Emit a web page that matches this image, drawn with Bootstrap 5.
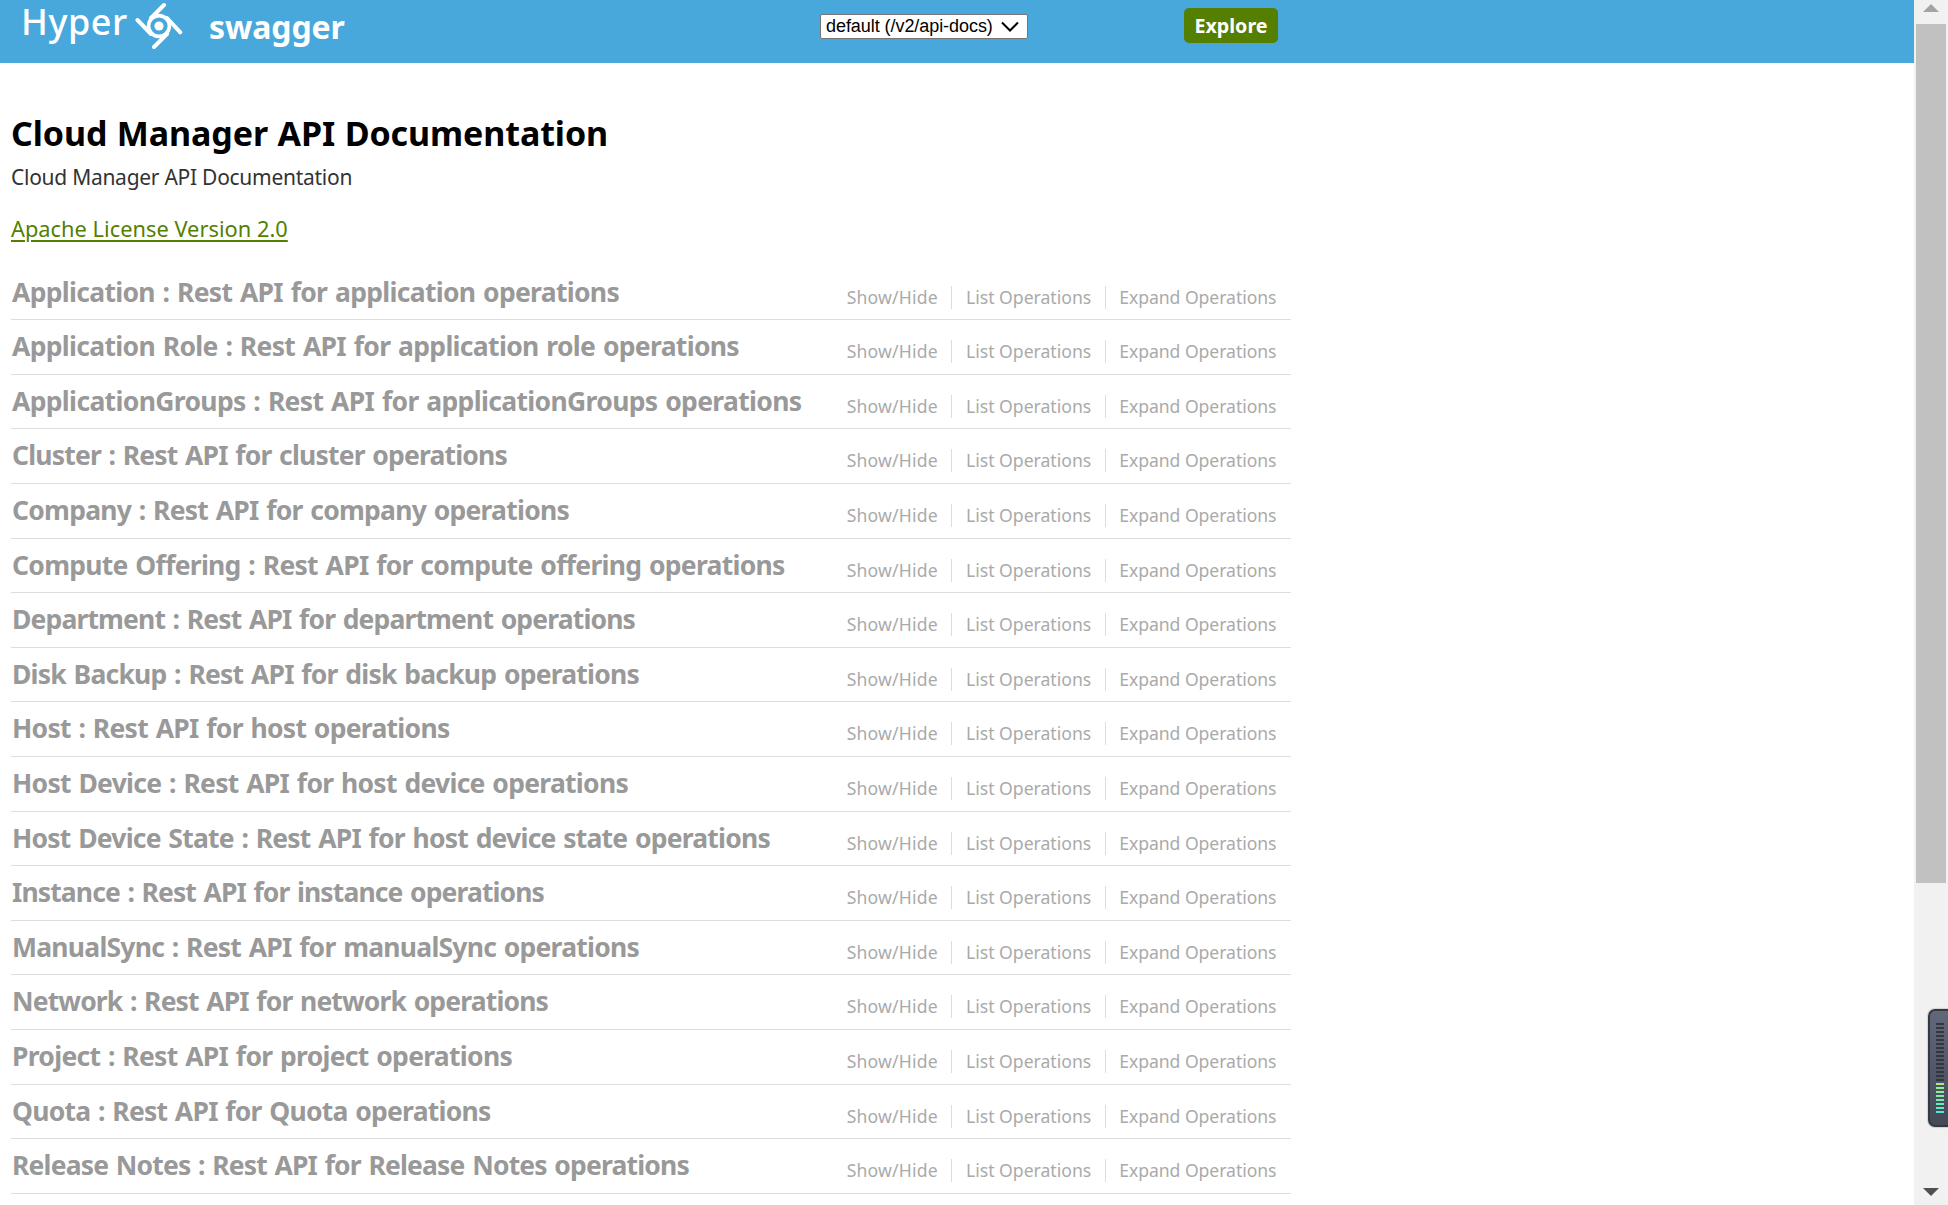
<!DOCTYPE html>
<html lang="en">
<head>
<meta charset="utf-8">
<title>Hyper swagger</title>
<link href="https://cdn.jsdelivr.net/npm/bootstrap@5.3.0/dist/css/bootstrap.min.css" rel="stylesheet">
<style>
body{font-family:"Noto Sans","Open Sans",sans-serif;background:#fff}
.api-bar{height:63px;background:#49a8db}
.api-inner{width:1291px}
.brand-area{width:820px;padding-left:20px}
.brand-hyper{font-size:36px;line-height:44px;font-weight:500;letter-spacing:.5px;width:113px;padding-left:1px}
.brand-icon{width:48px;height:50px;margin-left:2px}
.brand-swagger{font-size:32px;line-height:44px;font-weight:700;margin:5px 0 0 26px;letter-spacing:-.1px}
.spec-select{width:208px;height:25px;margin-top:14px;padding:0 8px 0 5px;border:1px solid #767676;border-radius:2px;font:18px/23px "Liberation Sans",sans-serif;color:#000;background:#fff;letter-spacing:-.06px}
.btn-explore{width:94px;height:35px;margin:8px 13px 0 0;padding:0;border:0;border-radius:5px;background:#547f00!important;color:#fff!important;font-size:19.7px;font-weight:700;line-height:35px}
.api-body{width:1291px;padding:45px 0 0 11px}
.api-title{font-size:34px;line-height:50px;font-weight:700;color:#000;margin:0;letter-spacing:-.1px;word-spacing:.8px}
.api-desc{font-size:21px;line-height:30px;letter-spacing:-.27px;color:#333;margin:4px 0 0}
.api-license{font-size:21.8px;line-height:30px;letter-spacing:.02px;color:#547f00;text-underline-offset:3px;text-decoration-thickness:2px;display:block;margin:22px 0 21.5px}
.api-row{height:54.62px;border-bottom:1px solid #ddd;padding-left:1px}
.api-name{font-size:26.5px;line-height:36px;font-weight:700;word-spacing:1.5px;color:#999;margin:8px 0 0}
.api-ops{font-size:17.6px;line-height:23px;color:#aaa;margin:20px 14.5px 0 0;height:23px}
.api-ops li{white-space:nowrap}
.api-ops li+li{border-left:1px solid #ddd;padding-left:13.5px}
.api-ops li:not(:last-child){padding-right:13.5px}
.api-ops li:first-child{letter-spacing:.2px}
.api-ops li:last-child{letter-spacing:-.05px}
.track{width:34px;background:#f1f1f1}
.thumb{width:30px;height:859px;margin-top:12px;background:#c1c1c1}
.meter{right:0;top:1009px;width:20px;height:118px;border:2px solid #363743;border-right:0;border-radius:7px 0 0 7px;background:linear-gradient(#61687a,#444957);box-shadow:0 0 1px 1px #0002;padding:12px 4px 0 6px}
.meter i{height:2px;width:8px;margin-bottom:2px;background:#33353f}
</style>
<script src="https://cdn.jsdelivr.net/npm/bootstrap@5.3.0/dist/js/bootstrap.bundle.min.js"></script>
</head>
<body class="overflow-hidden">
<div class="d-flex vh-100 overflow-hidden position-relative">
  <main class="flex-grow-1 overflow-hidden">
    <header class="api-bar">
      <div class="api-inner d-flex align-items-start">
        <div class="brand-area d-flex text-white">
          <span class="brand-hyper">Hyper</span>
          <svg class="brand-icon" viewBox="-24 -26 48 50" fill="none" stroke="#fff" stroke-width="4" stroke-linecap="round"><circle r="10.4" stroke-width="3.6"/><circle r="4.6" fill="#fff" stroke="none"/><path d="M-8-8 5-21M8-8 21.3 6.3M8 8-5 21M-8 8-21.5-6"/></svg>
          <span class="brand-swagger">swagger</span>
        </div>
        <div class="spec-select d-flex justify-content-between align-items-center text-nowrap">default (/v2/api-docs)
          <svg width="18" height="12" viewBox="0 0 18 12" fill="none" stroke="#000" stroke-width="2"><path d="m1 1.5 8 8 8-8"/></svg>
        </div>
        <button class="btn btn-explore ms-auto">Explore</button>
      </div>
    </header>
    <div class="api-body">
      <h1 class="api-title">Cloud Manager API Documentation</h1>
      <p class="api-desc">Cloud Manager API Documentation</p>
      <div class="d-flex"><a href="#" class="api-license">Apache License Version 2.0</a></div>
      <div id="resources"></div>
    </div>
  </main>
  <aside class="track d-flex flex-column align-items-center flex-shrink-0">
    <svg class="flex-shrink-0" width="16" height="12" viewBox="0 0 16 12"><path d="M8 4 16 12H0z" fill="#a3a3a3"/></svg>
    <div class="thumb"></div>
    <svg class="mt-auto mb-2 flex-shrink-0" width="16" height="9" viewBox="0 0 16 9"><path d="M0 0H16L8 8z" fill="#505050"/></svg>
  </aside>
  <div class="meter position-absolute d-flex flex-column" id="meter"></div>
</div>
<script>
// name, description, heading width in px
const resources=[["Application","application",607],["Application Role","application role",727],["ApplicationGroups","applicationGroups",789.5],["Cluster","cluster",495],["Company","company",557],["Compute Offering","compute offering",772.5],["Department","department",623],["Disk Backup","disk backup",627],["Host","host",437.5],["Host Device","host device",616],["Host Device State","host device state",758],["Instance","instance",532],["ManualSync","manualSync",627],["Network","network",536],["Project","project",500],["Quota","Quota",478.5],["Release Notes","Release Notes",677]];
document.getElementById("resources").innerHTML=resources.map(([n,d])=>`<section class="api-row d-flex justify-content-between align-items-start"><h2 class="api-name text-nowrap">${n} : Rest API for ${d} operations</h2><ul class="api-ops list-unstyled d-flex"><li>Show/Hide</li><li>List Operations</li><li>Expand Operations</li></ul></section>`).join("");
document.querySelectorAll(".api-name").forEach((h,i)=>{
  h.style.letterSpacing=(resources[i][2]-h.getBoundingClientRect().width)/h.textContent.length+"px";
});
const lit=["#a2ec80","#95ec8c","#8aec98","#7eeca4","#72ecb0","#68ecba","#60e8c4","#58e4cc"];
document.getElementById("meter").innerHTML=Array.from({length:23},(_,i)=>i<15?"<i></i>":`<i style="background:${lit[i-15]}"></i>`).join("");
</script>
</body>
</html>
